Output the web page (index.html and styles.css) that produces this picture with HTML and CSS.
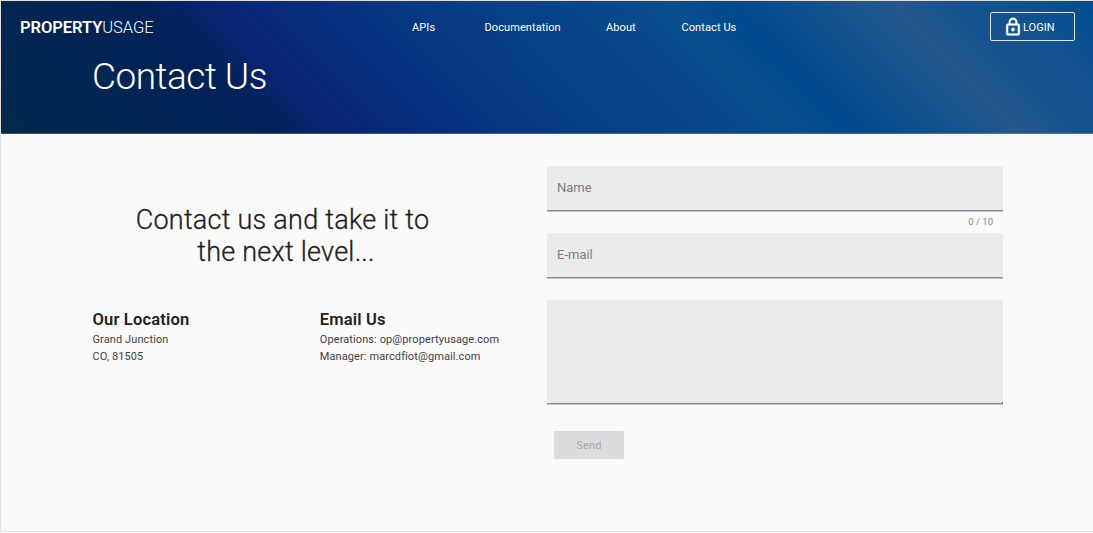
FILE: index.html
```html
<!DOCTYPE html>
<html lang="en">
<head>
<meta charset="utf-8">
<title>PropertyUsage - Contact Us</title>
<link rel="stylesheet" href="styles.css">
</head>
<body>
<div class="page">
  <header class="hero">
    <div class="toolbar">
      <a class="brand"><b>PROPERTY</b>USAGE</a>
      <nav class="nav">
        <a class="nav-apis">APIs</a>
        <a class="nav-docs">Documentation</a>
        <a class="nav-about">About</a>
        <a class="nav-contact">Contact Us</a>
      </nav>
      <a class="login">
        <svg class="lock" viewBox="0 0 24 24"><path fill="currentColor" stroke="currentColor" stroke-width=".7" d="M12 17c1.1 0 2-.9 2-2s-.9-2-2-2-2 .9-2 2 .9 2 2 2zm6-9h-1V6c0-2.760-2.240-5-5-5S7 3.240 7 6v2H6c-1.100 0-2 .9-2 2v10c0 1.100.9 2 2 2h12c1.100 0 2-.9 2-2V10c0-1.100-.9-2-2-2zM8.900 6c0-1.710 1.390-3.100 3.100-3.100s3.100 1.390 3.100 3.100v2H8.900V6zM18 20H6V10h12v10z"/></svg>
        <span class="login-label">LOGIN</span>
      </a>
    </div>
    <h1 class="title">Contact Us</h1>
  </header>
  <main class="content">
    <section class="info">
      <h2 class="tagline">Contact us and take it to<br><span class="tagline-end">the next level...</span></h2>
      <div class="details">
        <div class="detail">
          <h3>Our Location</h3>
          <p>Grand Junction</p>
          <p>CO, 81505</p>
        </div>
        <div class="detail">
          <h3>Email Us</h3>
          <p>Operations: op@propertyusage.com</p>
          <p>Manager: marcdfiot@gmail.com</p>
        </div>
      </div>
    </section>
    <form class="form">
      <div class="field name">Name</div>
      <div class="hint">0 / 10</div>
      <div class="field email">E-mail</div>
      <div class="field message"><span class="grip"></span></div>
      <button class="send" type="button" disabled>Send</button>
    </form>
  </main>
</div>
</body>
</html>
```

FILE: styles.css
```css
* { box-sizing: border-box; }
body {
  margin: 0;
  background: #fff;
  color: #212121;
  font-family: Roboto, "Liberation Sans", sans-serif;
}
.page {
  height: 532px;
  overflow: hidden;
  background: #fafafa;
  border: solid #e0e0e0;
  border-width: 1px 0 1px 1px;
}
.hero {
  height: 133px;
  color: #fff;
  border-bottom: 1px solid rgba(255, 255, 255, .2);
  background: linear-gradient(45deg, #03294b 0%, #002259 22.500%, #0a2576 28.500%, #063180 37%, #084f8d 65.500%, #004a8f 69.500%, #15548d 79%, #26588b 83.500%, #15538f 88%, #10518f 94%, #004d93 100%) border-box;
}
.toolbar {
  height: 52px;
  display: grid;
  grid-template-columns: 392px 1fr 85px;
  align-items: center;
  padding: 0 18px 0 19px;
}
.brand { font-size: 16.500px; font-weight: 300; letter-spacing: -.06px; white-space: nowrap; }
.brand b { font-weight: 600; }
.nav { display: flex; font-size: 11px; font-weight: 400; letter-spacing: .09px; }
.nav a { white-space: nowrap; }
.nav-apis { width: 72.500px; }
.nav-docs { width: 121.500px; }
.nav-about { width: 75.500px; }
.login {
  height: 29px;
  margin-top: -1px;
  display: flex;
  align-items: center;
  border: 1px solid rgba(255, 255, 255, .85);
  border-radius: 2px;
  padding-left: 12px;
  font-size: 11px;
}
.lock { width: 20px; height: 20px; }
.login-label { padding-top: 2px; }
.title {
  margin: 1px 0 0 91px;
  font-size: 37px;
  line-height: 46px;
  font-weight: 300;
  letter-spacing: -.5px;
}
.content {
  display: grid;
  grid-template-columns: 454.500px 456px;
  padding: 32px 0 0 91.500px;
}
.tagline {
  width: 380px;
  margin: 38px 0 0;
  text-align: center;
  font-size: 27px;
  line-height: 32px;
  font-weight: 300;
  letter-spacing: .25px;
  -webkit-text-stroke: .3px currentColor;
}
.tagline-end { padding-left: 7px; }
.details {
  display: grid;
  grid-template-columns: 1fr 1fr;
  margin-top: 42px;
}
.detail h3 { margin: 0 0 1px; font-size: 16.500px; line-height: 20px; font-weight: 600; letter-spacing: .18px; }
.detail p { margin: 0; font-size: 11px; line-height: 17px; letter-spacing: .1px; color: #3f3f3f; white-space: nowrap; }
.form { display: flex; flex-direction: column; }
.field {
  height: 45px;
  padding: 14px 10px;
  border-bottom: 1px solid #8a8a8a;
  border-radius: 3px 3px 0 0;
  background: #ebebeb;
  box-shadow: 0 1px 0 #c4c4c4;
  color: #7d7d7d;
  font-size: 13px;
  line-height: 16px;
}
.hint {
  height: 22px;
  padding-right: 10px;
  text-align: right;
  color: #888;
  font-size: 9.500px;
  line-height: 21px;
}
.message {
  height: 104px;
  margin-top: 22px;
  padding: 0;
  display: flex;
  align-items: flex-end;
  justify-content: flex-end;
}
.grip { width: 1px; height: 1px; background: #666; }
.send {
  width: 70px;
  height: 28px;
  margin: 27px 0 0 7px;
  padding: 0;
  border: 0;
  border-radius: 2px;
  background: #dcdcdc;
  box-shadow: 0 0 1px #ddd;
  color: #a8a8a8;
  font: 400 11px Roboto, sans-serif;
  letter-spacing: .2px;
}
```
